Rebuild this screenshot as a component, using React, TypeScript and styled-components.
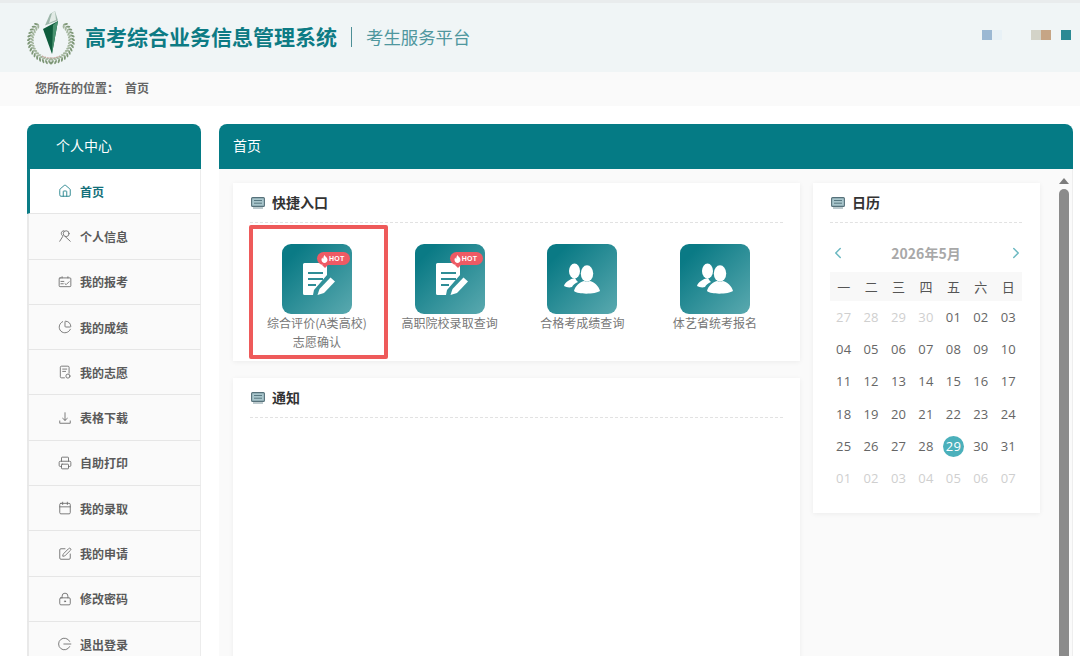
import React from "react";
import styled, { createGlobalStyle } from "styled-components";
import { House, ChartPie, Printer, Calendar, SquarePen, LockKeyhole, ChevronLeft, ChevronRight } from "lucide-react";

const GlobalStyle = createGlobalStyle`
  html, body {
    margin: 0;
    padding: 0;
    background: #fff;
    font-family: "Noto Sans CJK SC", "Liberation Sans", sans-serif;
  }
`;

const Page = styled.div`
  width: 1080px;
  height: 656px;
  overflow: hidden;
  display: flex;
  flex-direction: column;
  border-top: 3px solid #e9eced;
  box-sizing: border-box;
`;

const Header = styled.header`
  height: 69px;
  flex: none;
  background: #f0f5f6;
  display: flex;
  align-items: center;
  padding: 0 10px 0 27px;
`;

const SiteTitle = styled.h1`
  margin: -4px 0 0 10px;
  font-size: 21px;
  line-height: 30px;
  font-weight: 700;
  color: #0d7b84;
`;

const Divider = styled.span`
  width: 1px;
  height: 20px;
  margin: -1px 14px 0 14px;
  background: #4d8f96;
`;

const SubTitle = styled.span`
  margin-top: -3px;
  font-size: 17.4px;
  color: #4f979e;
`;

const Swatches = styled.div`
  margin-left: auto;
  display: flex;
  align-items: center;
  margin-top: -6px;
  margin-right: -1px;
`;

const Swatch = styled.i<{ $color: string; $gap?: number }>`
  display: block;
  width: 10px;
  height: 10px;
  background: ${(p) => p.$color};
  margin-left: ${(p) => p.$gap || 0}px;
`;

const Crumbs = styled.div`
  height: 34px;
  flex: none;
  box-sizing: border-box;
  padding: 0 0 3px 35px;
  background: #fafafa;
  display: flex;
  align-items: center;
  gap: 6px;
  font-size: 12px;
  font-weight: 700;
  color: #666;
`;

const Main = styled.div`
  flex: 1;
  display: grid;
  grid-template-columns: 174px 854px;
  column-gap: 18px;
  padding: 18px 0 0 27px;
  min-height: 0;
`;

const Side = styled.aside`
  display: flex;
  flex-direction: column;
`;

const BarTitle = styled.div<{ $inset: number }>`
  height: 45px;
  flex: none;
  box-sizing: border-box;
  padding: 0 0 4px ${(p) => p.$inset}px;
  display: flex;
  align-items: center;
  background: #057b85;
  border-radius: 8px 8px 0 0;
  color: #fff;
  font-size: 14px;
`;

const MenuItem = styled.div<{ $active?: boolean }>`
  height: 45.3px;
  flex: none;
  box-sizing: border-box;
  display: flex;
  align-items: center;
  gap: 8px;
  padding-left: ${(p) => (p.$active ? 28 : 29)}px;
  background: ${(p) => (p.$active ? "#fff" : "#fafafa")};
  border-left: ${(p) => (p.$active ? "3px solid #0b7c86" : "2px solid #e9e9e9")};
  border-right: 1px solid #ececec;
  border-bottom: 1px solid #e6e6e6;
  color: ${(p) => (p.$active ? "#14707a" : "#5a5a5a")};
  font-size: 12px;
  font-weight: 700;
  svg {
    width: 14px;
    height: 14px;
    flex: none;
    stroke-width: 1.5;
    color: ${(p) => (p.$active ? "#1d7f88" : "#6b6b6b")};
  }
`;

const Panel = styled.section`
  display: flex;
  flex-direction: column;
  min-height: 0;
`;

const PanelBody = styled.div`
  flex: 1;
  display: grid;
  grid-template-columns: 567px 227px 46px;
  column-gap: 13px;
  padding: 14px 0 0 14px;
  background: #fafafa;
  border-right: 1px solid #eee;
  min-height: 0;
  grid-template-rows: 1fr;
`;

const LeftColumn = styled.div`
  display: flex;
  flex-direction: column;
  gap: 17px;
`;

const Card = styled.div<{ $grow?: boolean }>`
  background: #fff;
  box-shadow: 0 1px 5px rgba(0, 0, 0, 0.06);
  padding: 0 17px;
  flex: ${(p) => (p.$grow ? "1" : "none")};
  align-self: ${(p) => (p.$grow ? "stretch" : "auto")};
`;

const CardTitle = styled.div`
  height: 39px;
  box-sizing: content-box;
  display: flex;
  align-items: center;
  gap: 7px;
  padding-left: 1px;
  border-bottom: 1px dashed #e2e2e2;
  font-size: 14px;
  font-weight: 700;
  color: #333;
  span {
    margin-top: -2px;
  }
`;

const Quick = styled.div`
  display: grid;
  grid-template-columns: repeat(4, 132.7px);
  padding: 21px 0 10px 0.6px;
`;

const QuickItem = styled.div`
  position: relative;
  display: flex;
  flex-direction: column;
  align-items: center;
  font-size: 12px;
  line-height: 19px;
  color: #777;
  text-align: center;
`;

const QuickLabel = styled.span`
  margin-top: -1px;
  letter-spacing: 0.04px;
`;

const Tile = styled.div`
  position: relative;
  width: 70px;
  height: 70px;
  border-radius: 9px;
  background: linear-gradient(135deg, #0a7a85 15%, #5aa9af 100%);
  svg {
    display: block;
  }
`;

const HotBadge = styled.span`
  position: absolute;
  left: 35px;
  top: 8px;
  width: 33px;
  height: 13px;
  border-radius: 7px;
  background: #ee5a64;
  color: #fff;
  font: 700 7px/13px "Liberation Sans", sans-serif;
  letter-spacing: 0.3px;
  display: flex;
  align-items: center;
  padding-left: 4px;
  box-sizing: border-box;
  gap: 1px;
  svg {
    display: block;
  }
  &::after {
    content: "";
    position: absolute;
    left: 5px;
    bottom: -3px;
    border: 3px solid transparent;
    border-top-color: #ee5a64;
    border-bottom: 0;
  }
`;

const Highlight = styled.div`
  position: absolute;
  left: -1.6px;
  top: -19px;
  width: 139px;
  height: 134px;
  box-sizing: border-box;
  border: 4px solid #ee5a5a;
  border-radius: 2px;
  pointer-events: none;
`;

const CalendarCard = styled(Card)`
  align-self: start;
  height: 330px;
  padding: 0 18px 0 17px;
`;

const CalNav = styled.div`
  height: 49px;
  box-sizing: border-box;
  padding: 11px 0 0 0;
  display: flex;
  align-items: center;
  justify-content: space-between;
  font-size: 14px;
  font-weight: 700;
  color: #a8a8a8;
  svg {
    width: 18px;
    height: 18px;
    margin: 0 -3px 0 -1px;
    color: #6cb9c2;
    stroke-width: 2;
  }
`;

const WeekRow = styled.div`
  display: grid;
  grid-template-columns: repeat(7, 1fr);
  height: 29px;
  align-items: center;
  background: #f8f8f8;
  text-align: center;
  font-size: 13px;
  color: #555;
`;

const DayGrid = styled.div`
  display: grid;
  grid-template-columns: repeat(7, 1fr);
  grid-auto-rows: 32.3px;
  align-items: center;
  justify-items: center;
  font-family: "Open Sans", sans-serif;
  font-size: 13px;
`;

const Day = styled.span<{ $muted?: boolean; $today?: boolean }>`
  width: 21px;
  height: 21px;
  line-height: 21px;
  border-radius: 50%;
  text-align: center;
  letter-spacing: 0.2px;
  white-space: nowrap;
  display: flex;
  justify-content: center;
  color: ${(p) => (p.$today ? "#fff" : p.$muted ? "#cfcfcf" : "#666")};
  background: ${(p) => (p.$today ? "#4bb0bb" : "transparent")};
`;

const ScrollBar = styled.div`
  display: flex;
  flex-direction: column;
  align-items: center;
  width: 10px;
  margin: -8px 0 0 6px;
  &::before {
    content: "";
    border: 5px solid transparent;
    border-top: 0;
    border-bottom: 6px solid #7c7c7c;
    margin: 3px 0 5px;
  }
`;

const ScrollThumb = styled.div`
  width: 10px;
  flex: 1;
  background: #8b8b8b;
  border-radius: 5px 5px 0 0;
`;

const iconProps = {
  viewBox: "0 0 24 24",
  fill: "none",
  stroke: "currentColor",
  strokeWidth: 1.5,
  strokeLinecap: "round" as const,
  strokeLinejoin: "round" as const,
};

const PersonIcon = () => (
  <svg {...iconProps}>
    <circle cx="14" cy="8" r="5" />
    <path d="M10 3C5 3 4 9 8 12M8 13 3 21M12.500 13 21 21" />
  </svg>
);

const ReportIcon = () => (
  <svg {...iconProps}>
    <rect x="2" y="5" width="20" height="15" rx="1.500" />
    <path d="M7 5V3M17 5V3M5 11h5M5 15h4M12 15l2 1.500 5-5" />
  </svg>
);

const WishIcon = () => (
  <svg {...iconProps}>
    <path d="M11 22H6a2 2 0 0 1-2-2V4a2 2 0 0 1 2-2h11a2 2 0 0 1 2 2v10" />
    <path d="M8 7h7M8 11h5" />
    <circle cx="17" cy="19" r="3.500" />
  </svg>
);

const DownloadIcon = () => (
  <svg {...iconProps}>
    <path d="M12 3v13M8 12.500l4 3.500 4-3.500M3 17v4h18v-4" />
  </svg>
);

const LogoutIcon = () => (
  <svg {...iconProps}>
    <path d="M20 7.500A10 10 0 1 0 20 16.500" />
    <path d="M10 12h12" />
  </svg>
);

const ChatIcon = () => (
  <svg width="14" height="12" viewBox="0 0 14 12">
    <rect x="0.600" y="0.600" width="12.800" height="8.800" rx="1" fill="#a9c6cc" stroke="#56717a" strokeWidth="1.100" />
    <path d="M3 3.500h8M3 6.200h8" stroke="#4f6f78" strokeWidth="0.900" />
    <path d="M2 11h10" stroke="#7b949b" strokeWidth="1" />
  </svg>
);

const FormIcon = () => (
  <svg width="70" height="70" viewBox="0 0 70 70">
    <path d="M22.500 19H44a1 1 0 0 1 1 1v11L32 46l-1 5h-8.500a1.500 1.500 0 0 1-1.500-1.500v-29a1.500 1.500 0 0 1 1.500-1.500z" fill="#fff" />
    <path d="M26 29h15M26 35h15M26 41h8" stroke="#2f8d96" strokeWidth="2" />
    <path d="M35.500 51l2-6L48.500 33.500 53 37.500 42 49z" fill="#fff" />
  </svg>
);

const PeopleIcon = () => (
  <svg width="70" height="70" viewBox="0 0 70 70" fill="#fff">
    <ellipse cx="27.500" cy="27" rx="5.500" ry="7.500" />
    <path d="M17 42c1-4 6-7 11-8 1 2 2 3 3 4-3 1-5 3-6 5-3 1-6 0-8-1z" />
    <ellipse cx="40" cy="29.500" rx="6.200" ry="8.200" />
    <path d="M27 47c1-5 6-9 10-10 2 1 4 1 6 0 4 1 9 5 10 10-4 3-21 4-26 0z" />
  </svg>
);

const Flame = () => (
  <svg width="7" height="8" viewBox="0 0 7 8" fill="#fff">
    <path d="M3.500 0c.3 1.400 2.800 2.400 3 4.500C6.600 6.700 5 8 3.500 8S.4 6.700.5 4.500C.6 3.500 1.200 2.800 1.500 2.500c0 .8.400 1.200.8 1.300C2.200 2.500 2.800 1 3.500 0z" />
  </svg>
);

const leafAngles = Array.from({ length: 16 }, (_, i) => 42 + i * 9);

const Logo = () => (
  <svg width="48" height="54" viewBox="0 0 48 54">
    {leafAngles.map((a) => (
      <g key={a}>
        <ellipse cx="24" cy="7.500" rx="1" ry="2.300" fill="#7e9777" transform={`rotate(${a} 24 29.500) rotate(40 24 7.500)`} />
        <ellipse cx="24" cy="7.500" rx="1" ry="2.300" fill="#a3b59d" transform={`rotate(${a} 24 29.500) translate(0 3) rotate(-40 24 7.500)`} />
        <ellipse cx="24" cy="7.500" rx="1" ry="2.300" fill="#7e9777" transform={`rotate(${-a} 24 29.500) rotate(-40 24 7.500)`} />
        <ellipse cx="24" cy="7.500" rx="1" ry="2.300" fill="#a3b59d" transform={`rotate(${-a} 24 29.500) translate(0 3) rotate(40 24 7.500)`} />
      </g>
    ))}
    <path d="M16 18 31 10 25 43z" fill="#0f5c3d" />
    <path d="M26 14 31 10 25 43z" fill="#4a9270" />
    <path d="M23 3 28 0 31 9.500 18 14.500z" fill="#9fb7ab" />
    <path d="M25 2 28 0 29 9 22 12z" fill="#e2ebe6" />
    <path d="M15 45q9 4 18 0" fill="none" stroke="#d9a2a0" strokeWidth="1" strokeDasharray="1.500 1" />
  </svg>
);

const menu: [string, React.ReactNode][] = [
  ["首页", <House key="h" />],
  ["个人信息", <PersonIcon key="p" />],
  ["我的报考", <ReportIcon key="r" />],
  ["我的成绩", <ChartPie key="c" />],
  ["我的志愿", <WishIcon key="w" />],
  ["表格下载", <DownloadIcon key="d" />],
  ["自助打印", <Printer key="pr" />],
  ["我的录取", <Calendar key="ca" />],
  ["我的申请", <SquarePen key="s" />],
  ["修改密码", <LockKeyhole key="l" />],
  ["退出登录", <LogoutIcon key="o" />],
];

const pad = (n: number) => (n < 10 ? "0" + n : "" + n);

const days = [
  ...[27, 28, 29, 30].map((d) => ({ d, muted: true })),
  ...Array.from({ length: 31 }, (_, i) => ({ d: i + 1, muted: false })),
  ...[1, 2, 3, 4, 5, 6, 7].map((d) => ({ d, muted: true })),
];

const App: React.FC = () => {
  return (
    <Page>
      <GlobalStyle />
      <Header>
        <Logo />
        <SiteTitle>高考综合业务信息管理系统</SiteTitle>
        <Divider />
        <SubTitle>考生服务平台</SubTitle>
        <Swatches>
          <Swatch $color="#9bb8d3" />
          <Swatch $color="#e8f1f6" />
          <Swatch $color="#d3d3c8" $gap={29} />
          <Swatch $color="#c6a585" />
          <Swatch $color="#2b8a94" $gap={10} />
        </Swatches>
      </Header>
      <Crumbs>
        <span>您所在的位置：</span>
        <span>首页</span>
      </Crumbs>
      <Main>
        <Side>
          <BarTitle $inset={29}>个人中心</BarTitle>
          {menu.map(([label, icon], i) => (
            <MenuItem key={label} $active={i === 0}>
              {icon}
              <span>{label}</span>
            </MenuItem>
          ))}
        </Side>
        <Panel>
          <BarTitle $inset={14}>首页</BarTitle>
          <PanelBody>
            <LeftColumn>
              <Card>
                <CardTitle>
                  <ChatIcon />
                  <span>快捷入口</span>
                </CardTitle>
                <Quick>
                  <QuickItem>
                    <Tile>
                      <FormIcon />
                      <HotBadge>
                        <Flame />
                        HOT
                      </HotBadge>
                    </Tile>
                    <QuickLabel>
                      综合评价(A类高校)
                      <br />
                      志愿确认
                    </QuickLabel>
                    <Highlight />
                  </QuickItem>
                  <QuickItem>
                    <Tile>
                      <FormIcon />
                      <HotBadge>
                        <Flame />
                        HOT
                      </HotBadge>
                    </Tile>
                    <QuickLabel>高职院校录取查询</QuickLabel>
                  </QuickItem>
                  <QuickItem>
                    <Tile>
                      <PeopleIcon />
                    </Tile>
                    <QuickLabel>合格考成绩查询</QuickLabel>
                  </QuickItem>
                  <QuickItem>
                    <Tile>
                      <PeopleIcon />
                    </Tile>
                    <QuickLabel>体艺省统考报名</QuickLabel>
                  </QuickItem>
                </Quick>
              </Card>
              <Card $grow>
                <CardTitle>
                  <ChatIcon />
                  <span>通知</span>
                </CardTitle>
              </Card>
            </LeftColumn>
            <CalendarCard>
              <CardTitle>
                <ChatIcon />
                <span>日历</span>
              </CardTitle>
              <CalNav>
                <ChevronLeft />
                <span>2026年5月</span>
                <ChevronRight />
              </CalNav>
              <WeekRow>
                {["一", "二", "三", "四", "五", "六", "日"].map((w) => (
                  <span key={w}>{w}</span>
                ))}
              </WeekRow>
              <DayGrid>
                {days.map((x, i) => (
                  <Day key={i} $muted={x.muted} $today={!x.muted && x.d === 29}>
                    {pad(x.d)}
                  </Day>
                ))}
              </DayGrid>
            </CalendarCard>
            <ScrollBar>
              <ScrollThumb />
            </ScrollBar>
          </PanelBody>
        </Panel>
      </Main>
    </Page>
  );
};

export default App;
